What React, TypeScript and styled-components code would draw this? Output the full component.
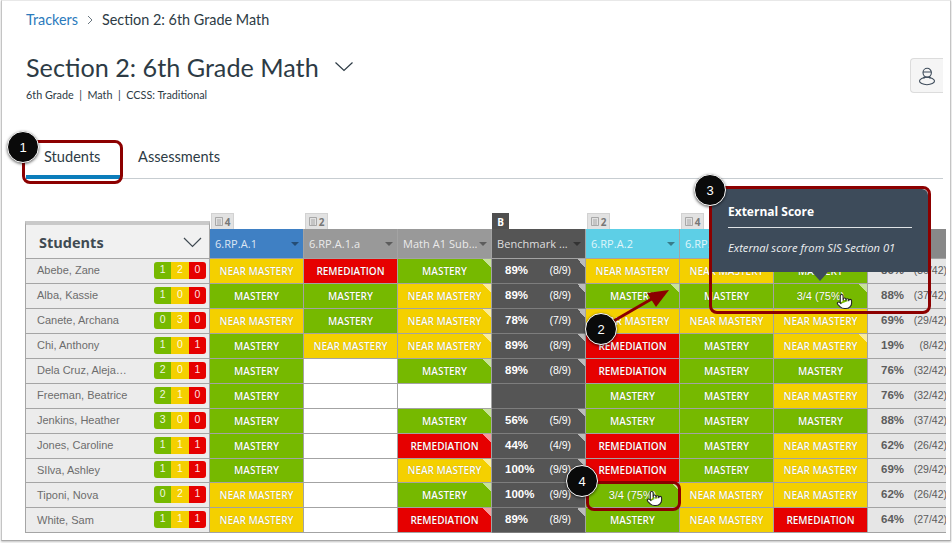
import React from "react";
import styled, { createGlobalStyle } from "styled-components";
import { Pointer } from "lucide-react";

const Global = createGlobalStyle`
  html, body { margin: 0; padding: 0; background: #fff; }
  #root { width: 952px; height: 543px; position: relative; overflow: hidden; }
  * { box-sizing: border-box; }
`;

const Frame = styled.div`
  width: 950px;
  height: 541px;
  margin-left: 1px;
  background: #fff;
  border-left: 1px solid #c4c4c4;
  border-right: 1px solid #c4c4c4;
  border-top: 1px solid #e8e8e8;
  border-bottom: 1px solid #a8a8a8;
  box-shadow: 0 1px 2px rgba(0, 0, 0, 0.25);
  padding: 0 0 0 23px;
  font-family: "Lato", sans-serif;
  color: #2d3b45;
  overflow: hidden;
`;

const Crumbs = styled.nav`
  display: flex;
  align-items: center;
  height: 17px;
  margin: 10px 0 0 1px;
  font-size: 14.4px;
`;
const CrumbLink = styled.span`
  color: #2b7abc;
`;
const CrumbSep = styled.svg`
  width: 8px;
  height: 10px;
  margin: 0 8px 0 8px;
`;

const HeadRow = styled.header`
  display: flex;
  justify-content: space-between;
  align-items: flex-start;
  margin: 23px 7px 0 1px;
  height: 57px;
`;
const TitleLine = styled.div`
  display: flex;
  align-items: center;
  height: 32px;
`;
const Title = styled.h1`
  margin: 0;
  font-size: 25.2px;
  font-weight: 400;
  line-height: 32px;
`;
const Caret = styled.svg`
  width: 20px;
  height: 11px;
  margin: -2px 0 0 15px;
`;
const Meta = styled.div`
  margin-top: 5px;
  font-size: 10.8px;
  line-height: 14px;
`;
const IconButton = styled.button`
  width: 33px;
  height: 35px;
  margin-top: 7px;
  padding: 0;
  display: flex;
  align-items: center;
  justify-content: center;
  background: #f5f5f5;
  border: 1px solid #dcdcdc;
  border-right: none;
  border-radius: 4px 0 0 4px;
`;

const Tabs = styled.div`
  display: flex;
  height: 40px;
  margin: 31px 7px 0 1px;
  border-bottom: 1px solid #c7cdd1;
`;
const Tab = styled.div<{ $active?: boolean }>`
  height: 40px;
  padding: 0 18px;
  font-size: 14.6px;
  line-height: 35px;
  width: ${(p) => (p.$active ? "94px" : "auto")};
  border-bottom: ${(p) => (p.$active ? "4px solid #0b7dbb" : "none")};
`;

const Table = styled.div`
  display: grid;
  grid-template-columns: 185px repeat(8, 94px);
  grid-template-rows: 46px repeat(11, 24.95px);
  width: 921px;
  margin-top: 34px;
  overflow: hidden;
`;

const CornerHead = styled.div`
  align-self: end;
  height: 38px;
  display: flex;
  align-items: center;
  justify-content: space-between;
  padding: 2px 7px 0 13px;
  background: #f1f1f1;
  border-top: 4px solid #c9c9c9;
  border-right: 1px solid #a5a5a5;
  border-bottom: 1px solid #a5a5a5;
  border-left: 1px solid #a5a5a5;
  font-family: "Open Sans", sans-serif;
  font-size: 14.5px;
  font-weight: 700;
  color: #3f4a52;
`;
const CornerCaret = styled.svg`
  width: 19px;
  height: 11px;
`;

const ColHead = styled.div`
  display: flex;
  flex-direction: column;
  min-width: 0;
`;
const TagRow = styled.div`
  height: 16px;
  display: flex;
`;
const Tag = styled.div<{ $dark?: boolean }>`
  height: 16px;
  width: ${(p) => (p.$dark ? "17px" : "23px")};
  display: flex;
  align-items: center;
  justify-content: center;
  gap: 2px;
  margin-left: ${(p) => (p.$dark ? "0" : "1px")};
  background: ${(p) => (p.$dark ? "#4f4f4f" : "#e2e2e2")};
  color: ${(p) => (p.$dark ? "#fff" : "#777")};
  border: 1px solid ${(p) => (p.$dark ? "#4f4f4f" : "#d2d2d2")};
  border-bottom: none;
  font-family: "Open Sans", sans-serif;
  font-size: 10px;
  font-weight: 700;
`;
const TagIcon = styled.svg`
  width: 8px;
  height: 9px;
`;
const ColBar = styled.div<{ $bg: string }>`
  flex: 1;
  display: flex;
  align-items: center;
  justify-content: space-between;
  padding: 0 4px 0 5px;
  background: ${(p) => p.$bg};
  border-right: 1px solid #a3a3a3;
  border-bottom: 1px solid #a3a3a3;
  color: rgba(255, 255, 255, 0.82);
  font-family: "Open Sans", sans-serif;
  font-size: 11px;
  letter-spacing: 0.05px;
  white-space: nowrap;
  overflow: hidden;
`;
const ColCaret = styled.span`
  width: 0;
  height: 0;
  flex: none;
  margin-top: 1px;
  border-left: 4px solid transparent;
  border-right: 4px solid transparent;
  border-top: 4px solid rgba(0, 0, 0, 0.4);
`;

const NameCell = styled.div`
  display: flex;
  align-items: center;
  justify-content: space-between;
  padding: 0 3px 1px 11px;
  background: #ececec;
  border-left: 1px solid #a5a5a5;
  border-right: 1px solid #a5a5a5;
  border-bottom: 1px solid #a5a5a5;
  font-family: "Liberation Sans", sans-serif;
  font-size: 11px;
  color: #6d6d6d;
  min-width: 0;
`;
const Tally = styled.div`
  display: flex;
  width: 52px;
  height: 17px;
  border-radius: 3px;
  overflow: hidden;
`;
const TallyPart = styled.span<{ $bg: string }>`
  flex: 1;
  background: ${(p) => p.$bg};
  color: rgba(255, 255, 255, 0.9);
  font-size: 10.5px;
  line-height: 15px;
  text-align: center;
`;

const LABELS = { M: "MASTERY", N: "NEAR MASTERY", R: "REMEDIATION", E: "" } as const;
const FILLS = { M: "#76b900", N: "#f4d000", R: "#e60000", E: "#ffffff" } as const;
type Kind = keyof typeof FILLS;

const Corner = styled.i`
  position: absolute;
  top: 0;
  right: 0;
  width: 8px;
  height: 8px;
  background: linear-gradient(to top right, transparent 50%, rgba(255, 255, 255, 0.6) 50%);
`;
const Cell = styled.div<{ $bg: string }>`
  position: relative;
  display: flex;
  align-items: center;
  justify-content: center;
  background: ${(p) => p.$bg};
  border-right: 1px solid #a3a3a3;
  border-bottom: 1px solid #a3a3a3;
  color: #fff;
  font-family: "Open Sans", sans-serif;
  font-size: 10px;
  font-weight: 600;
  white-space: nowrap;
  text-shadow: 0 0 1px rgba(0, 0, 0, 0.3);
`;
const ScoreText = styled.span`
  font-family: "Liberation Sans", sans-serif;
  font-size: 11px;
  font-weight: 400;
`;
const ScoreCell = styled.div<{ $dark?: boolean }>`
  position: relative;
  display: flex;
  align-items: center;
  justify-content: space-between;
  padding: 0 14px 2px 13px;
  background: ${(p) => (p.$dark ? "#555555" : "#e6e6e6")};
  border-right: 1px solid #a3a3a3;
  border-bottom: 1px solid ${(p) => (p.$dark ? "#7d7d7d" : "#a3a3a3")};
  color: ${(p) => (p.$dark ? "#fff" : "#5c5c5c")};
  font-family: "Liberation Sans", sans-serif;
  white-space: nowrap;
`;
const Pct = styled.b`
  font-size: 11.5px;
`;
const Frac = styled.span`
  font-size: 10.5px;
`;

const Overlay = styled.div`
  position: absolute;
  inset: 0;
  pointer-events: none;
`;
const Callout = styled.div<{ $x: number; $y: number }>`
  position: absolute;
  left: ${(p) => p.$x - 16}px;
  top: ${(p) => p.$y - 16}px;
  width: 32px;
  height: 32px;
  display: flex;
  align-items: center;
  justify-content: center;
  border-radius: 50%;
  background: #0a0a0a;
  border: 1px solid #fff;
  box-shadow: 0 1px 3px rgba(0, 0, 0, 0.6);
  color: #fff;
  font-family: "Liberation Sans", sans-serif;
  font-size: 13px;
`;
const RedBox = styled.div<{ $x: number; $y: number; $w: number; $h: number }>`
  position: absolute;
  left: ${(p) => p.$x}px;
  top: ${(p) => p.$y}px;
  width: ${(p) => p.$w}px;
  height: ${(p) => p.$h}px;
  border: 3px solid #8c0000;
  border-radius: 8px;
`;
const Tooltip = styled.div`
  position: absolute;
  left: 712px;
  top: 189px;
  width: 216px;
  height: 83px;
  padding: 15px 16px 0;
  background: #3d4b5a;
  border-radius: 6px 6px 0 0;
  color: #fff;
  font-family: "Open Sans", sans-serif;
  &::after {
    content: "";
    position: absolute;
    left: 100px;
    top: 83px;
    border-left: 8px solid transparent;
    border-right: 8px solid transparent;
    border-top: 9px solid #3d4b5a;
  }
`;
const TipTitle = styled.div`
  font-size: 12px;
  font-weight: 700;
  line-height: 16px;
  padding-bottom: 7px;
  border-bottom: 1px solid #dfe3e6;
`;
const TipBody = styled.div`
  margin-top: 13px;
  font-size: 11.2px;
  font-style: italic;
  line-height: 14px;
  white-space: nowrap;
  color: #eef0f2;
`;
const ArrowSvg = styled.svg`
  position: absolute;
  left: 0;
  top: 0;
  width: 952px;
  height: 543px;
`;
const Hand = styled(Pointer)<{ $x: number; $y: number }>`
  position: absolute;
  left: ${(p) => p.$x}px;
  top: ${(p) => p.$y}px;
`;

type Row = { name: string; t: [number, number, number]; c: string[]; pct: [string, string, boolean]; ext: [string, string] };
const ROWS: Row[] = [
  { name: "Abebe, Zane", t: [1, 2, 0], c: ["N", "R", "M*", "N", "N", "M"], pct: ["89%", "(8/9)", true], ext: ["86%", "(36/42)"] },
  { name: "Alba, Kassie", t: [1, 0, 0], c: ["M", "M", "N*", "M*", "M", "S*"], pct: ["89%", "(8/9)", true], ext: ["88%", "(37/42)"] },
  { name: "Canete, Archana", t: [0, 3, 0], c: ["N", "M", "N*", "N", "N", "N"], pct: ["78%", "(7/9)", true], ext: ["69%", "(29/42)"] },
  { name: "Chi, Anthony", t: [1, 0, 1], c: ["M", "N", "N*", "R", "M", "N*"], pct: ["89%", "(8/9)", true], ext: ["19%", "(8/42)"] },
  { name: "Dela Cruz, Aleja…", t: [2, 0, 1], c: ["M", "E", "M*", "R", "M", "M"], pct: ["89%", "(8/9)", true], ext: ["76%", "(32/42)"] },
  { name: "Freeman, Beatrice", t: [2, 1, 0], c: ["M", "E", "E", "M", "M", "N"], pct: ["", "", false], ext: ["76%", "(32/42)"] },
  { name: "Jenkins, Heather", t: [3, 0, 0], c: ["M", "E", "M*", "M", "M", "M"], pct: ["56%", "(5/9)", true], ext: ["88%", "(37/42)"] },
  { name: "Jones, Caroline", t: [1, 1, 1], c: ["M", "E", "R*", "R", "M", "N"], pct: ["44%", "(4/9)", true], ext: ["62%", "(26/42)"] },
  { name: "SIlva, Ashley", t: [1, 1, 1], c: ["M", "E", "N*", "R", "M", "N"], pct: ["100%", "(9/9)", true], ext: ["69%", "(29/42)"] },
  { name: "Tiponi, Nova", t: [0, 2, 1], c: ["N", "E", "M*", "S*", "N", "N"], pct: ["100%", "(9/9)", false], ext: ["62%", "(26/42)"] },
  { name: "White, Sam", t: [1, 1, 1], c: ["N", "E", "R*", "M", "N", "R"], pct: ["89%", "(8/9)", true], ext: ["64%", "(27/42)"] },
];

const COLS: { label: string; bg: string; tag?: string; dark?: boolean; caret?: boolean }[] = [
  { label: "6.RP.A.1", bg: "#3f80c4", tag: "4", caret: true },
  { label: "6.RP.A.1.a", bg: "#999999", tag: "2", caret: true },
  { label: "Math A1 Sub...", bg: "#999999", caret: true },
  { label: "Benchmark ...", bg: "#555555", tag: "B", dark: true, caret: true },
  { label: "6.RP.A.2", bg: "#5dcfe6", tag: "2", caret: true },
  { label: "6.RP.A.2.a", bg: "#5dcfe6", tag: "4", caret: true },
  { label: "6.RP.A.2.b", bg: "#5dcfe6" },
  { label: "6.RP.A.R...", bg: "#888888" },
];

function Mark({ code }: { code: string }) {
  const key = code[0];
  const starred = code.includes("*");
  if (key === "S") {
    return (
      <Cell $bg={FILLS.M}>
        <ScoreText>3/4 (75%)</ScoreText>
        {starred && <Corner />}
      </Cell>
    );
  }
  const k = key as Kind;
  return (
    <Cell $bg={FILLS[k]}>
      {LABELS[k]}
      {starred && <Corner />}
    </Cell>
  );
}

export default function App() {
  return (
    <>
      <Global />
      <Frame>
        <Crumbs>
          <CrumbLink>Trackers</CrumbLink>
          <CrumbSep viewBox="0 0 8 10">
            <path d="M2 1l4 4-4 4" fill="none" stroke="#6b7780" strokeWidth="1" />
          </CrumbSep>
          <span>Section 2: 6th Grade Math</span>
        </Crumbs>
        <HeadRow>
          <div>
            <TitleLine>
              <Title>Section 2: 6th Grade Math</Title>
              <Caret viewBox="0 0 20 11">
                <path d="M1.500 1.500L10 9.500l8.500-8" fill="none" stroke="#2d3b45" strokeWidth="1.2" />
              </Caret>
            </TitleLine>
            <Meta>6th Grade&nbsp; |&nbsp; Math&nbsp; |&nbsp; CCSS: Traditional</Meta>
          </div>
          <IconButton aria-label="Student view">
            <svg width="18" height="20" viewBox="0 0 18 20" fill="none" stroke="#3d4b5a" strokeWidth="1.1">
              <path d="M5 6.500a4.200 4.200 0 0 1 8.400 0c0 2.600-1.800 4.600-4.200 4.600S5 9.100 5 6.500zM5.100 6h8.200" />
              <ellipse cx="9" cy="15" rx="7.500" ry="3.700" />
              <path d="M6 10.800v2M12 10.800v2" />
            </svg>
          </IconButton>
        </HeadRow>
        <Tabs>
          <Tab $active>Students</Tab>
          <Tab>Assessments</Tab>
        </Tabs>
        <Table>
          <CornerHead>
            Students
            <CornerCaret viewBox="0 0 19 11">
              <path d="M1 1l8.500 8.500L18 1" fill="none" stroke="#3f4a52" strokeWidth="1.2" />
            </CornerCaret>
          </CornerHead>
          {COLS.map((col) => (
            <ColHead key={col.label}>
              <TagRow>
                {col.tag && (
                  <Tag $dark={col.dark}>
                    {!col.dark && (
                      <TagIcon viewBox="0 0 8 9">
                        <path d="M.5.500h7v8h-7zM2 3h4M2 5h4M2 7h4" fill="none" stroke="#999" strokeWidth="0.8" />
                      </TagIcon>
                    )}
                    {col.tag}
                  </Tag>
                )}
              </TagRow>
              <ColBar $bg={col.bg}>
                {col.label}
                {col.caret && <ColCaret />}
              </ColBar>
            </ColHead>
          ))}
          {ROWS.map((r) => (
            <React.Fragment key={r.name}>
              <NameCell>
                {r.name}
                <Tally>
                  <TallyPart $bg={FILLS.M}>{r.t[0]}</TallyPart>
                  <TallyPart $bg={FILLS.N}>{r.t[1]}</TallyPart>
                  <TallyPart $bg={FILLS.R}>{r.t[2]}</TallyPart>
                </Tally>
              </NameCell>
              <Mark code={r.c[0]} />
              <Mark code={r.c[1]} />
              <Mark code={r.c[2]} />
              <ScoreCell $dark>
                <Pct>{r.pct[0]}</Pct>
                <Frac>{r.pct[1]}</Frac>
                {r.pct[0] && r.pct[2] && <Corner />}
              </ScoreCell>
              <Mark code={r.c[3]} />
              <Mark code={r.c[4]} />
              <Mark code={r.c[5]} />
              <ScoreCell>
                <Pct>{r.ext[0]}</Pct>
                <Frac>{r.ext[1]}</Frac>
              </ScoreCell>
            </React.Fragment>
          ))}
        </Table>
      </Frame>
      <Overlay>
        <RedBox $x={22} $y={140} $w={101} $h={44} />
        <Tooltip>
          <TipTitle>External Score</TipTitle>
          <TipBody>External score from SIS Section 01</TipBody>
        </Tooltip>
        <RedBox $x={709} $y={186} $w={222} $h={128} />
        <RedBox $x={586} $y={481} $w={95} $h={30} />
        <ArrowSvg viewBox="0 0 952 543">
          <path d="M605 326L655 297" stroke="#8c0000" strokeWidth="3" fill="none" />
          <path d="M669 290L647 293L656 307Z" fill="#8c0000" />
        </ArrowSvg>
        <Hand $x={836} $y={293} size={17} color="#222" fill="#fff" strokeWidth={1.5} />
        <Hand $x={646} $y={490} size={17} color="#222" fill="#fff" strokeWidth={1.5} />
        <Callout $x={23} $y={147}>1</Callout>
        <Callout $x={601} $y={329}>2</Callout>
        <Callout $x={710} $y={190}>3</Callout>
        <Callout $x={582} $y={481}>4</Callout>
      </Overlay>
    </>
  );
}
